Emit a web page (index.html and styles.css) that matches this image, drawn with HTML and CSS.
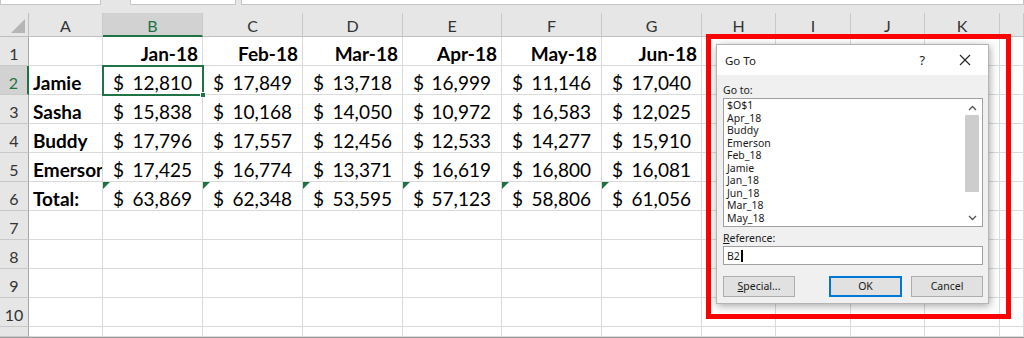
FILE: index.html
```html
<!DOCTYPE html>
<html>
<head>
	<meta charset="utf-8" />
	<title>Go To</title>
	<link rel="stylesheet" href="styles.css">
</head>
<body>
<div class="app">

	<div class="toolbar">
		<span class="box namebox"></span>
		<span class="box fxbox"></span>
		<span class="box formula"></span>
	</div>

	<div class="sheet">
		<!-- column headers -->
		<div class="corner"><span class="tri"></span></div>
		<div class="colh">A</div>
		<div class="colh sel">B</div>
		<div class="colh">C</div>
		<div class="colh">D</div>
		<div class="colh">E</div>
		<div class="colh">F</div>
		<div class="colh">G</div>
		<div class="colh">H</div>
		<div class="colh">I</div>
		<div class="colh">J</div>
		<div class="colh">K</div>
		<div class="colh"></div>

		<!-- row 1 -->
		<div class="rowh">1</div>
		<div class="c"></div>
		<div class="c hd">Jan-18</div>
		<div class="c hd">Feb-18</div>
		<div class="c hd">Mar-18</div>
		<div class="c hd">Apr-18</div>
		<div class="c hd">May-18</div>
		<div class="c hd">Jun-18</div>
		<div class="c"></div><div class="c"></div><div class="c"></div><div class="c"></div><div class="c"></div>

		<!-- row 2 -->
		<div class="rowh sel">2</div>
		<div class="c nm">Jamie</div>
		<div class="c acc active"><span>$</span><span>12,810</span><i class="handle"></i></div>
		<div class="c acc"><span>$</span><span>17,849</span></div>
		<div class="c acc"><span>$</span><span>13,718</span></div>
		<div class="c acc"><span>$</span><span>16,999</span></div>
		<div class="c acc"><span>$</span><span>11,146</span></div>
		<div class="c acc"><span>$</span><span>17,040</span></div>
		<div class="c"></div><div class="c"></div><div class="c"></div><div class="c"></div><div class="c"></div>

		<!-- row 3 -->
		<div class="rowh">3</div>
		<div class="c nm">Sasha</div>
		<div class="c acc"><span>$</span><span>15,838</span></div>
		<div class="c acc"><span>$</span><span>10,168</span></div>
		<div class="c acc"><span>$</span><span>14,050</span></div>
		<div class="c acc"><span>$</span><span>10,972</span></div>
		<div class="c acc"><span>$</span><span>16,583</span></div>
		<div class="c acc"><span>$</span><span>12,025</span></div>
		<div class="c"></div><div class="c"></div><div class="c"></div><div class="c"></div><div class="c"></div>

		<!-- row 4 -->
		<div class="rowh">4</div>
		<div class="c nm">Buddy</div>
		<div class="c acc"><span>$</span><span>17,796</span></div>
		<div class="c acc"><span>$</span><span>17,557</span></div>
		<div class="c acc"><span>$</span><span>12,456</span></div>
		<div class="c acc"><span>$</span><span>12,533</span></div>
		<div class="c acc"><span>$</span><span>14,277</span></div>
		<div class="c acc"><span>$</span><span>15,910</span></div>
		<div class="c"></div><div class="c"></div><div class="c"></div><div class="c"></div><div class="c"></div>

		<!-- row 5 -->
		<div class="rowh">5</div>
		<div class="c nm">Emerson</div>
		<div class="c acc"><span>$</span><span>17,425</span></div>
		<div class="c acc"><span>$</span><span>16,774</span></div>
		<div class="c acc"><span>$</span><span>13,371</span></div>
		<div class="c acc"><span>$</span><span>16,619</span></div>
		<div class="c acc"><span>$</span><span>16,800</span></div>
		<div class="c acc"><span>$</span><span>16,081</span></div>
		<div class="c"></div><div class="c"></div><div class="c"></div><div class="c"></div><div class="c"></div>

		<!-- row 6 totals -->
		<div class="rowh">6</div>
		<div class="c nm">Total:</div>
		<div class="c acc err"><span>$</span><span>63,869</span></div>
		<div class="c acc err"><span>$</span><span>62,348</span></div>
		<div class="c acc err"><span>$</span><span>53,595</span></div>
		<div class="c acc err"><span>$</span><span>57,123</span></div>
		<div class="c acc err"><span>$</span><span>58,806</span></div>
		<div class="c acc err"><span>$</span><span>61,056</span></div>
		<div class="c"></div><div class="c"></div><div class="c"></div><div class="c"></div><div class="c"></div>

		<!-- empty rows -->
		<div class="rowh">7</div>
		<div class="c"></div><div class="c"></div><div class="c"></div><div class="c"></div><div class="c"></div><div class="c"></div>
		<div class="c"></div><div class="c"></div><div class="c"></div><div class="c"></div><div class="c"></div><div class="c"></div>

		<div class="rowh">8</div>
		<div class="c"></div><div class="c"></div><div class="c"></div><div class="c"></div><div class="c"></div><div class="c"></div>
		<div class="c"></div><div class="c"></div><div class="c"></div><div class="c"></div><div class="c"></div><div class="c"></div>

		<div class="rowh">9</div>
		<div class="c"></div><div class="c"></div><div class="c"></div><div class="c"></div><div class="c"></div><div class="c"></div>
		<div class="c"></div><div class="c"></div><div class="c"></div><div class="c"></div><div class="c"></div><div class="c"></div>

		<div class="rowh">10</div>
		<div class="c"></div><div class="c"></div><div class="c"></div><div class="c"></div><div class="c"></div><div class="c"></div>
		<div class="c"></div><div class="c"></div><div class="c"></div><div class="c"></div><div class="c"></div><div class="c"></div>

		<!-- row 11, only its top shows -->
		<div class="rowh"></div>
		<div class="c"></div><div class="c"></div><div class="c"></div><div class="c"></div><div class="c"></div><div class="c"></div>
		<div class="c"></div><div class="c"></div><div class="c"></div><div class="c"></div><div class="c"></div><div class="c"></div>
	</div>

	<!-- red highlight round the dialog -->
	<div class="highlight"></div>

	<div class="dialog">
		<div class="titlebar">
			<span class="title">Go To</span>
			<span class="help">?</span>
			<svg class="close" width="12" height="12" viewBox="0 0 12 12"><path d="M1 1 L11 11 M11 1 L1 11" stroke="#222" stroke-width="1.1" fill="none"/></svg>
		</div>
		<div class="body">
			<div class="label">Go to:</div>
			<div class="listbox">
				<ul class="items">
					<li>$O$1</li>
					<li>Apr_18</li>
					<li>Buddy</li>
					<li>Emerson</li>
					<li>Feb_18</li>
					<li>Jamie</li>
					<li>Jan_18</li>
					<li>Jun_18</li>
					<li>Mar_18</li>
					<li>May_18</li>
				</ul>
				<div class="scroll">
					<svg width="9" height="6" viewBox="0 0 9 6"><path d="M1 5 L4.5 1.5 L8 5" stroke="#555" stroke-width="1.3" fill="none"/></svg>
					<div class="thumb"></div>
					<svg width="9" height="6" viewBox="0 0 9 6"><path d="M1 1 L4.5 4.5 L8 1" stroke="#555" stroke-width="1.3" fill="none"/></svg>
				</div>
			</div>
			<div class="label ref"><u>R</u>eference:</div>
			<div class="input">B2<span class="caret"></span></div>
			<div class="buttons">
				<span class="btn"><u>S</u>pecial...</span>
				<span class="btn ok">OK</span>
				<span class="btn cancel">Cancel</span>
			</div>
		</div>
	</div>

</div>
</body>
</html>
```

FILE: styles.css
```css
* {
  box-sizing: border-box;
}

body {
  margin: 0;
  overflow: hidden;
  background: #fff;
}

.app {
  position: relative;
  width: 1024px;
  height: 338px;
  overflow: hidden;
  border-bottom: 1px solid #9b9b9b;
}

/* strip left from the formula bar */
.toolbar {
  display: flex;
  height: 13px;
  background: #e6e6e6;
  align-items: flex-start;
}

.box {
  height: 5px;
  background: #fff;
  border: 1px solid #c6c6c6;
  border-top: none;
}

.namebox {
  width: 101px;
}

.fxbox {
  width: 106px;
  margin-left: 29px;
}

.formula {
  flex: 1;
  margin-left: 5px;
}

/* the grid */
.sheet {
  display: grid;
  grid-template-columns: 29px 74px 100px 100px 100px 99px 100px 100px 74px 75px 74px 75px 24px;
  grid-template-rows: 24px repeat(10, 29px) 10px;
  font-family: Lato, "Liberation Sans", sans-serif;
  font-size: 19px;
  color: #000;
}

.corner {
  position: relative;
  background: #e6e6e6;
  border-right: 1px solid #bfbfbf;
  border-bottom: 1px solid #bfbfbf;
}

.corner .tri {
  position: absolute;
  right: 3px;
  bottom: 3px;
  width: 0;
  height: 0;
  border-left: 14px solid transparent;
  border-bottom: 14px solid #b5b5b5;
}

.colh {
  background: #e6e6e6;
  border-right: 1px solid #c9c9c9;
  border-bottom: 1px solid #bfbfbf;
  color: #333;
  font-size: 16px;
  text-align: center;
  line-height: 25px;
}

.colh.sel {
  background: #d2d2d2;
  color: #217346;
  border-bottom: 2px solid #217346;
}

.rowh {
  background: #e6e6e6;
  border-right: 1px solid #a6a6a6;
  border-bottom: 1px solid #c9c9c9;
  color: #333;
  font-size: 16px;
  text-align: center;
  line-height: 34px;
}

.rowh.sel {
  background: #d2d2d2;
  color: #217346;
  border-right: 2px solid #217346;
}

.c {
  position: relative;
  border-right: 1px solid #dadada;
  border-bottom: 1px solid #dadada;
  white-space: nowrap;
  overflow: hidden;
  line-height: 34px;
}

.hd {
  font-weight: bold;
  text-align: right;
  padding-right: 4px;
}

.nm {
  font-weight: bold;
  padding-left: 4px;
}

.acc {
  display: flex;
  justify-content: space-between;
  padding: 0 10px 0 10px;
}

.active {
  overflow: visible;
  outline: 2px solid #217346;
  outline-offset: -1px;
  z-index: 1;
}

.handle {
  position: absolute;
  right: -4px;
  bottom: -4px;
  width: 6px;
  height: 6px;
  background: #217346;
  border: 1px solid #fff;
}

.err::before {
  content: "";
  position: absolute;
  left: 0;
  top: 0;
  border-top: 7px solid #1e7145;
  border-right: 7px solid transparent;
}

/* red frame */
.highlight {
  position: absolute;
  left: 706px;
  top: 34px;
  width: 305px;
  height: 285px;
  border: 5px solid #ff0000;
}

/* Go To dialog */
.dialog {
  position: absolute;
  left: 716px;
  top: 44px;
  width: 273px;
  height: 260px;
  background: #f0f0f0;
  border: 1px solid #b4b4b4;
  box-shadow: 1px 2px 8px rgba(0, 0, 0, 0.35);
  font-family: "Noto Sans", "Open Sans", sans-serif;
  font-size: 10.5px;
  color: #1a1a1a;
}

.titlebar {
  display: flex;
  align-items: center;
  height: 30px;
  background: #fff;
  padding-left: 8px;
}

.title {
  flex: 1;
  font-size: 11.5px;
}

.help {
  font-size: 12.5px;
  margin-right: 34px;
}

.close {
  margin-right: 17px;
}

.body {
  padding: 8px 5px 0 6px;
}

.label {
  height: 15px;
}

.listbox {
  display: flex;
  height: 129px;
  background: #fff;
  border: 1px solid #a0a0a0;
}

.items {
  flex: 1;
  list-style: none;
  margin: 0;
  padding: 0 0 0 3px;
  line-height: 12.5px;
}

.scroll {
  display: flex;
  flex-direction: column;
  align-items: center;
  width: 16px;
  margin: 1px 2px 1px 0;
  padding-top: 5px;
}

.thumb {
  width: 14px;
  height: 77px;
  margin: 4px 0 0;
  background: #cdcdcd;
  flex: none;
}

.scroll svg:last-child {
  margin-top: auto;
  margin-bottom: 4px;
}

.label.ref {
  margin-top: 4px;
}

.input {
  display: flex;
  align-items: center;
  height: 19px;
  padding-left: 3px;
  background: #fff;
  border: 1px solid #a0a0a0;
}

.caret {
  display: inline-block;
  width: 2px;
  height: 12px;
  background: #000;
  margin-left: 1px;
}

.buttons {
  display: flex;
  margin-top: 11px;
}

.btn {
  flex: none;
  width: 72px;
  height: 21px;
  line-height: 19px;
  text-align: center;
  background: #e1e1e1;
  border: 1px solid #adadad;
}

.btn.ok {
  width: 73px;
  margin-left: 34px;
  border: 2px solid #0078d7;
  line-height: 17px;
}

.btn.cancel {
  margin-left: 9px;
}
```
